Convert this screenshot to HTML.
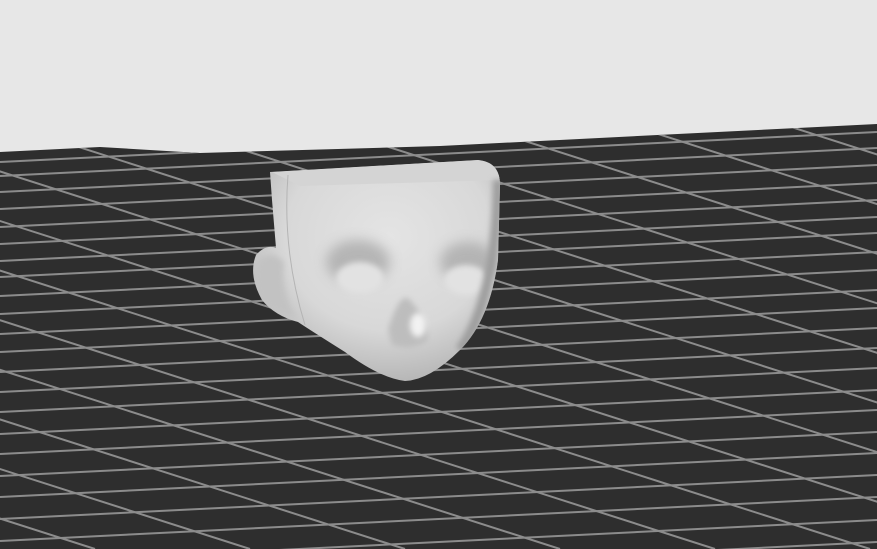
<!DOCTYPE html><html><head><style>html,body{margin:0;padding:0;background:#e7e7e7;overflow:hidden;width:877px;height:549px}svg{display:block}</style></head><body>
<svg width="877" height="549" viewBox="0 0 877 549" xmlns="http://www.w3.org/2000/svg">
<defs>
<radialGradient id="hg" cx="0.55" cy="0.35" r="0.7"><stop offset="0" stop-color="#e4e4e4"/><stop offset="0.6" stop-color="#d8d8d8"/><stop offset="1" stop-color="#b0b0b0"/></radialGradient>
<filter id="bl" x="-50%" y="-50%" width="200%" height="200%"><feGaussianBlur stdDeviation="6"/></filter>
<filter id="bl2" x="-50%" y="-50%" width="200%" height="200%"><feGaussianBlur stdDeviation="3"/></filter>
<clipPath id="fl"><polygon points="0,152 100,147 200,153 440,146 877,124 877,549 0,549"/></clipPath>
<clipPath id="hc"><path d="M270,172 L478,160 Q500,162 500,185 L498,260 Q490,320 460,350 Q430,380 405,381 Q380,378 345,352 Q310,330 298,322 Q275,316 262,300 Q248,275 256,255 Q266,244 276,248 L272,200 Z"/></clipPath>
</defs>
<rect width="877" height="549" fill="#e7e7e7"/>
<polygon points="0,152 100,147 200,153 440,146 877,124 877,549 0,549" fill="#2e2e2e"/>
<g clip-path="url(#fl)" stroke="#8c8c8c" stroke-width="2" id="grid"></g>
<path d="M270,172 L478,160 Q500,162 500,185 L498,260 Q490,320 460,350 Q430,380 405,381 Q380,378 345,352 Q310,330 298,322 Q275,316 262,300 Q248,275 256,255 Q266,244 276,248 L272,200 Z" fill="url(#hg)"/>
<g clip-path="url(#hc)">
<path d="M272,172 L478,160 Q498,162 500,180 L300,186 Z" fill="#d4d4d4"/>
<path d="M288,175 Q282,250 305,325" stroke="#b4b4b4" fill="none" stroke-width="1"/>
<path d="M258,262 Q270,248 284,262 Q280,290 296,318 Q272,312 262,298 Q252,280 258,262Z" fill="#c2c2c2" filter="url(#bl2)"/>
<ellipse cx="358" cy="262" rx="32" ry="22" fill="#aaaaaa" filter="url(#bl)" opacity="0.8"/>
<ellipse cx="468" cy="262" rx="28" ry="20" fill="#aaaaaa" filter="url(#bl)" opacity="0.8"/>
<ellipse cx="360" cy="278" rx="24" ry="16" fill="#e2e2e2" filter="url(#bl2)"/>
<ellipse cx="466" cy="280" rx="22" ry="15" fill="#e2e2e2" filter="url(#bl2)"/>
<path d="M388,330 Q400,290 410,300 Q426,318 428,340 Q412,352 392,345 Z" fill="#bdbdbd" filter="url(#bl2)"/>
<ellipse cx="418" cy="325" rx="8" ry="12" fill="#f2f2f2" filter="url(#bl2)"/>
<path d="M498,180 Q496,300 460,350" stroke="#9e9e9e" stroke-width="10" fill="none" filter="url(#bl2)"/>
</g>
</svg>
<script>
var g=document.getElementById('grid'),s='';
var rs=[92,106,118,132,148,165,183,200,217,233,252,270,290,308,328,348,368,390,410,432,453,475,497,520,542,566,590];
rs.forEach(function(r){s+='<line x1="0" y1="'+(r+44)+'" x2="877" y2="'+r+'"/>';});
for(var xb=-1300;xb<2400;xb+=155){var x0=xb-549/0.32;s+='<line x1="'+x0+'" y1="0" x2="'+xb+'" y2="549"/>';}
g.innerHTML=s;
</script>
</body></html>
